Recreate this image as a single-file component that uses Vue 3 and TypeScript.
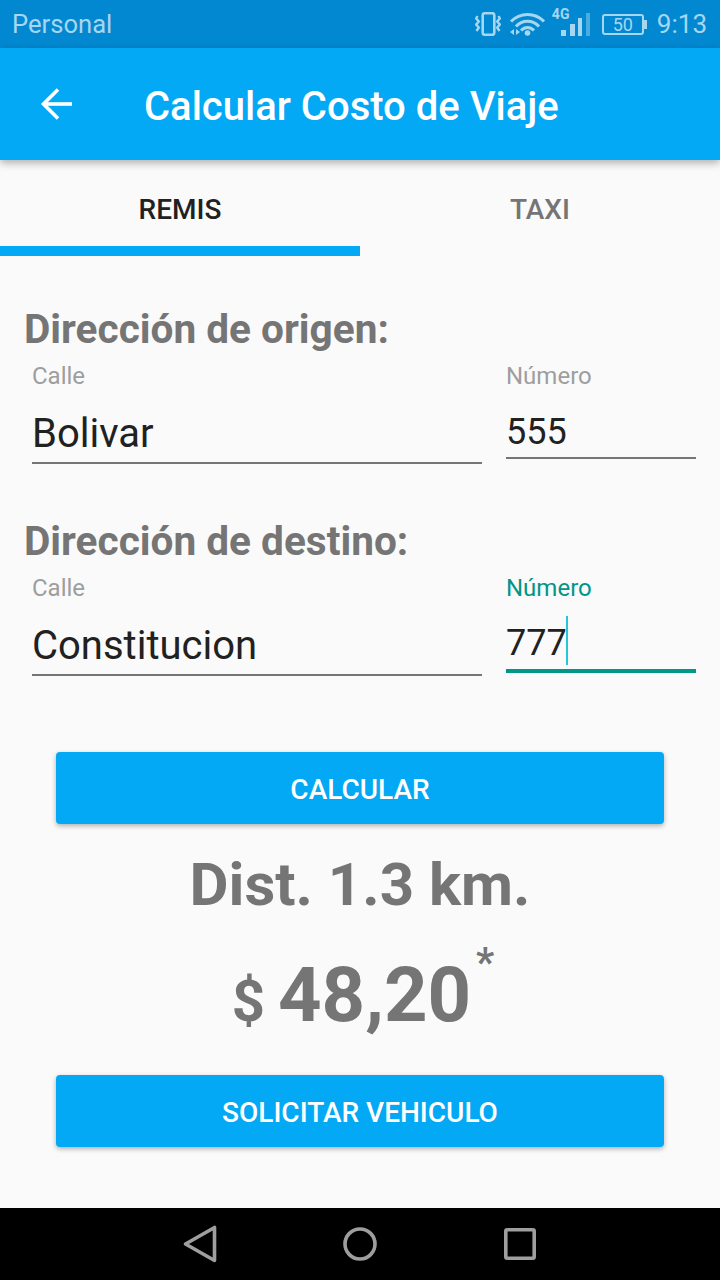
<template>
  <div class="screen">
    <!-- Status bar -->
    <div class="status-bar">
      <span class="carrier">Personal</span>
      <div class="status-icons">
        <svg class="ic-vibrate" width="26" height="24" viewBox="0 0 26 24" fill="none" stroke="#a6d6f0">
          <rect x="7.7" y="1.2" width="11.6" height="21.6" rx="2" stroke-width="2.6" />
          <path d="M2.5 4 L1.2 6.5 L3.8 9.5 L1.2 12.5 L3.8 15.5 L1.5 19" stroke-width="2.4" />
          <path d="M23.5 4 L24.8 6.5 L22.2 9.5 L24.8 12.5 L22.2 15.5 L24.5 19" stroke-width="2.4" />
        </svg>
        <svg class="ic-wifi" width="36" height="24" viewBox="0 0 36 24" fill="none" stroke="#a6d6f0" stroke-width="3">
          <path d="M2 9.5 C11 0 26 0 35 9.5" />
          <path d="M7 14.5 C13 7.5 24 7.5 30 14.5" />
          <path d="M12 18.5 C16 14.5 21 14.5 25 18.5" />
          <circle cx="18.5" cy="21" r="2.8" fill="#a6d6f0" stroke="none" />
          <path d="M5 17 V23 L1 20 Z M7 17 L11 20 L7 23 Z" fill="#a6d6f0" stroke="none" />
        </svg>
        <div class="signal">
          <span class="net">4G</span>
          <svg width="29" height="23" viewBox="0 0 29 23" fill="#a6d6f0">
            <rect x="0" y="17" width="5" height="6" />
            <rect x="9" y="11" width="5" height="12" />
            <rect x="17" y="5" width="4" height="18" />
            <rect x="25" y="0" width="4" height="23" opacity="0.45" />
          </svg>
        </div>
        <div class="battery">
          <span>50</span>
        </div>
        <span class="clock">9:13</span>
      </div>
    </div>

    <!-- App bar -->
    <header class="app-bar">
      <svg class="back" width="36" height="36" viewBox="0 0 36 36" fill="none" stroke="#fff" stroke-width="3.6">
        <path d="M34 18 H6" />
        <path d="M20 3.5 L5.5 18 L20 32.5" />
      </svg>
      <h1>Calcular Costo de Viaje</h1>
    </header>

    <!-- Tabs -->
    <nav class="tabs">
      <div
        v-for="tab in tabs"
        :key="tab"
        class="tab"
        :class="{ active: tab === activeTab }"
      >
        {{ tab }}
      </div>
    </nav>

    <main class="content">
      <section v-for="addr in addresses" :key="addr.title" class="address">
        <h2>{{ addr.title }}</h2>
        <div class="fields">
          <div class="field calle">
            <label>Calle</label>
            <div class="value">{{ addr.street }}</div>
          </div>
          <div class="field numero" :class="{ focused: addr.focused }">
            <label>Número</label>
            <div class="value">{{ addr.number }}<i v-if="addr.focused" class="caret" /></div>
          </div>
        </div>
      </section>

      <button class="btn calc">CALCULAR</button>
      <div class="dist">Dist. 1.3 km.</div>
      <div class="price">
        <span class="currency">$</span>
        <span class="amount">48,20</span>
        <span class="star">*</span>
      </div>
      <button class="btn request">SOLICITAR VEHICULO</button>
    </main>

    <!-- Nav bar -->
    <footer class="nav-bar">
      <svg width="34" height="38" viewBox="0 0 34 38" fill="none" stroke="#9e9e9e" stroke-width="3.6" stroke-linejoin="round">
        <path d="M31.5 2.5 V35.5 L2.5 19 Z" />
      </svg>
      <svg width="34" height="34" viewBox="0 0 34 34" fill="none" stroke="#9e9e9e" stroke-width="3.6">
        <circle cx="17" cy="17" r="15" />
      </svg>
      <svg width="32" height="32" viewBox="0 0 32 32" fill="none" stroke="#9e9e9e" stroke-width="3.6" stroke-linejoin="round">
        <rect x="1.8" y="1.8" width="28.4" height="28.4" rx="1.5" />
      </svg>
    </footer>
  </div>
</template>

<script setup lang="ts">
interface Address {
  title: string;
  street: string;
  number: string;
  focused: boolean;
}

const tabs = ["REMIS", "TAXI"];
const activeTab = "REMIS";

const addresses: Address[] = [
  { title: "Dirección de origen:", street: "Bolivar", number: "555", focused: false },
  { title: "Dirección de destino:", street: "Constitucion", number: "777", focused: true },
];
</script>

<style>
html, body { margin: 0; padding: 0; }
</style>

<style scoped>
.screen {
  width: 720px;
  height: 1280px;
  display: flex;
  flex-direction: column;
  background: #fafafa;
  font-family: Roboto, "Liberation Sans", sans-serif;
  overflow: hidden;
}

.status-bar {
  height: 48px;
  flex: none;
  background: #0288d1;
  display: flex;
  align-items: center;
  justify-content: space-between;
  padding: 0 13px 0 12px;
  color: #a6d6f0;
}
.carrier { font-size: 25.6px; }
.status-icons { display: flex; align-items: center; }
.ic-vibrate { margin-right: 8px; }
.ic-wifi { margin-right: 16px; }
.signal { position: relative; width: 29px; height: 23px; margin-right: 12px; }
.signal svg { display: block; }
.net {
  position: absolute;
  left: -9px;
  top: -6px;
  font-size: 14px;
  line-height: 14px;
  font-weight: 700;
}
.battery {
  width: 38px;
  height: 17px;
  border: 2px solid #a6d6f0;
  border-radius: 3px;
  margin-right: 13px;
  display: flex;
  align-items: center;
  justify-content: center;
  font-size: 18px;
  position: relative;
}
.battery::after {
  content: "";
  position: absolute;
  right: -5px;
  top: 4px;
  width: 3px;
  height: 9px;
  background: #a6d6f0;
}
.clock { font-size: 26px; }

.app-bar {
  height: 112px;
  flex: none;
  background: #03a9f4;
  display: flex;
  align-items: center;
  padding-left: 38px;
  box-shadow: 0 3px 8px rgba(0, 0, 0, 0.3);
  position: relative;
}
.back { flex: none; }
.app-bar h1 {
  margin: 4px 0 0 70px;
  color: #fff;
  font-size: 40px;
  font-weight: 500;
}

.tabs { display: flex; height: 96px; flex: none; }
.tab {
  flex: 1;
  box-sizing: border-box;
  padding-top: 33px;
  text-align: center;
  font-size: 28px;
  font-weight: 500;
  color: #757575;
}
.tab.active {
  color: #212121;
  border-bottom: 10px solid #03a9f4;
}

.content {
  flex: 1;
  display: flex;
  flex-direction: column;
}

.address { padding-left: 24px; margin-top: 50px; height: 163px; }
.address + .address { margin-top: 0; height: 212px; padding-top: 49px; box-sizing: border-box; }
.address h2 {
  margin: -1px 0 0;
  font-size: 40.6px;
  line-height: 48px;
  font-weight: 700;
  color: #757575;
}
.fields { display: flex; padding-left: 8px; margin-top: 7px; }
.field label { display: block; font-size: 24px; line-height: 32px; color: #9e9e9e; }
.calle { width: 450px; margin-right: 24px; }
.numero { width: 190px; }
.value {
  color: #212121;
  border-bottom: 2px solid #757575;
  position: relative;
}
.calle .value { font-size: 40px; line-height: 56px; height: 56px; margin-top: 14px; }
.numero .value { font-size: 36px; line-height: 50px; height: 50px; margin-top: 15px; }
.numero.focused label { color: #009688; }
.numero.focused .value { border-bottom: 4px solid #009688; line-height: 48px; }
.caret {
  display: inline-block;
  width: 2px;
  height: 49px;
  background: #26c6da;
  vertical-align: top;
  margin: -3px 0 0 -1px;
}

.btn {
  display: block;
  width: 608px;
  height: 72px;
  margin: 0 auto;
  padding: 2px 0 0;
  flex: none;
  border: 0;
  border-radius: 4px;
  background: #03a9f4;
  color: #fff;
  font-family: inherit;
  font-size: 28px;
  font-weight: 500;
  box-shadow: 0 2px 5px rgba(0, 0, 0, 0.3);
}
.calc { margin-top: 71px; }
.dist {
  margin-top: 25px;
  text-align: center;
  font-size: 60px;
  line-height: 72px;
  font-weight: 700;
  color: #757575;
}
.price {
  margin-top: 24px;
  padding-left: 6px;
  height: 100px;
  display: flex;
  justify-content: center;
  align-items: baseline;
  color: #757575;
  font-weight: 700;
}
.currency { font-size: 58px; line-height: 100px; margin-right: 13px; }
.amount { font-size: 76px; line-height: 100px; }
.star { font-size: 40px; line-height: 20px; position: relative; top: -45px; margin-left: 5px; }
.request { margin-top: 30px; }

.nav-bar {
  height: 72px;
  flex: none;
  background: #000;
  display: flex;
  align-items: center;
  padding-left: 183px;
}
.nav-bar svg:nth-child(1) { margin-right: 126px; }
.nav-bar svg:nth-child(2) { margin-right: 127px; }
</style>
